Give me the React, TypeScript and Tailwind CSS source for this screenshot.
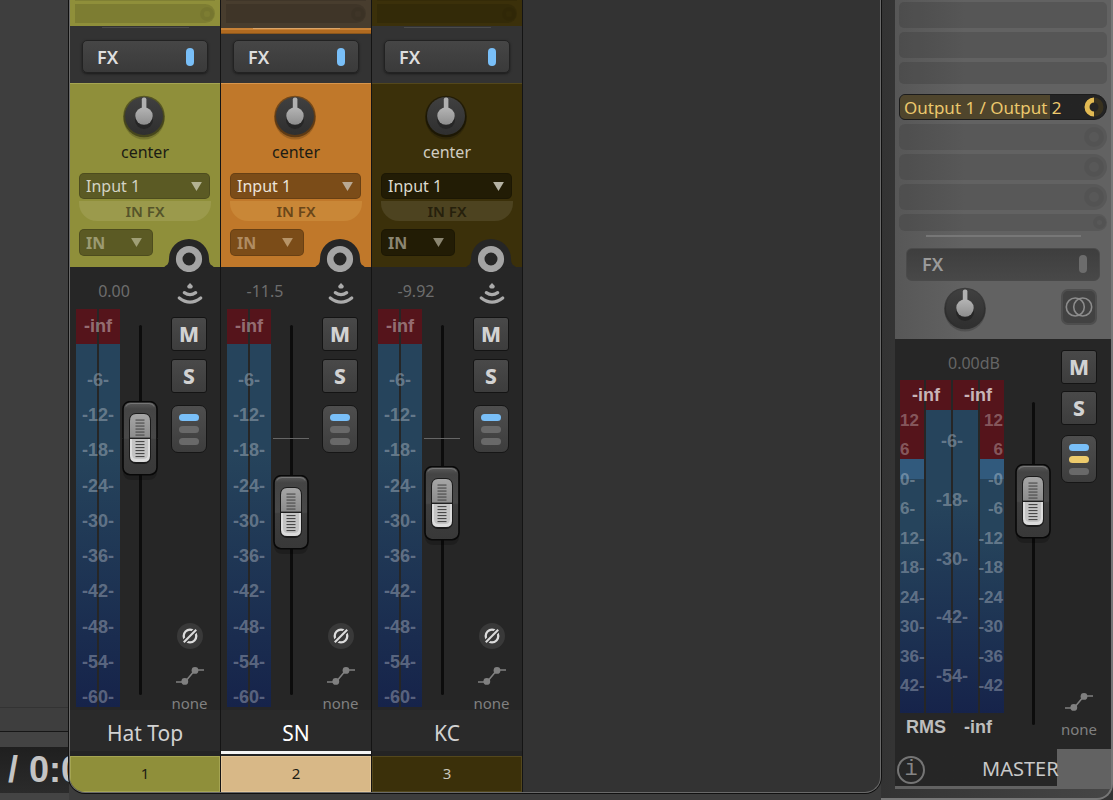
import { useState } from 'react';
import type { ReactNode } from 'react';

const CHANNELS = [
  {
    id: 1,
    name: 'Hat Top',
    db: '0.00',
    level: 0.743,
    color: 'bg-[#8f8f3a] border-t-[#a5a552]',
    tab: 'bg-[#8f8f3a] border-[#a5a552] text-[#1c1c14]',
    sends: 'bg-[#8f8f3a] h-[26px]',
    label: 'text-[#1c1c14]',
    select: 'bg-[#5b5a24] text-[#d3d3c4]',
    mode: 'bg-[#5b5a24] text-[#9b9a72]',
    arrow: 'text-[#b3b292]',
    modeArrow: 'text-[#a09f76]',
    inFx: 'bg-[#9b9a4c] text-[#55542a]',
    selected: false,
  },
  {
    id: 2,
    name: 'SN',
    db: '-11.5',
    level: 0.493,
    color: 'bg-[#c0782a] border-t-[#d8964c]',
    tab: 'bg-[#d8b887] border-[#e6c899] text-[#1c1c14]',
    sends: 'bg-[#483d2e] h-[28px]',
    label: 'text-[#1c1c14]',
    select: 'bg-[#7b4c18] text-[#ece4da]',
    mode: 'bg-[#7b4c18] text-[#b08c62]',
    arrow: 'text-[#b9a994]',
    modeArrow: 'text-[#b79468]',
    inFx: 'bg-[#c98737] text-[#694619]',
    selected: true,
  },
  {
    id: 3,
    name: 'KC',
    db: '-9.92',
    level: 0.524,
    color: 'bg-[#3b300a] border-t-[#53471c]',
    tab: 'bg-[#3b300a] border-[#53471c] text-[#c9c6ba]',
    sends: 'bg-[#3b300a] h-[26px]',
    label: 'text-[#d0cdc2]',
    select: 'bg-[#221c05] text-[#dcdacf]',
    mode: 'bg-[#221c05] text-[#8b8672]',
    arrow: 'text-[#b5b2a4]',
    modeArrow: 'text-[#8b8672]',
    inFx: 'bg-[#4d4320] text-[#26200c]',
    selected: false,
  },
];

const SCALE = ['-6-', '-12-', '-18-', '-24-', '-30-', '-36-', '-42-', '-48-', '-54-', '-60-'];
const MASTER_SCALE = ['-6-', '-18-', '-30-', '-42-', '-54-'];
const MASTER_LEFT = ['12', '6', '0-', '6-', '12-', '18-', '24-', '30-', '36-', '42-'];
const MASTER_RIGHT = ['12', '6', '-0', '-6', '-12', '-18', '-24', '-30', '-36', '-42'];
const GROOVES = [0, 3, 6, 9, 12, 15];

function Knob({ label }: { label: string }) {
  return (
    <label className="relative block h-[46px] w-[44px]">
      <svg viewBox="0 0 44 46" className="h-[46px] w-[44px]">
        <defs>
          <linearGradient id="knobBody" x1="0" y1="0" x2="0" y2="1">
            <stop offset="0" stopColor="#404040" />
            <stop offset="1" stopColor="#2f2f2f" />
          </linearGradient>
          <linearGradient id="knobBall" x1="0" y1="0" x2="0" y2="1">
            <stop offset="0" stopColor="#b4b4b4" />
            <stop offset="1" stopColor="#8e8e8e" />
          </linearGradient>
        </defs>
        <circle cx="22" cy="25" r="20.5" fill="#000" opacity="0.18" />
        <circle cx="22" cy="22.5" r="20.8" fill="#000" opacity="0.4" />
        <circle cx="22" cy="22" r="19" fill="url(#knobBody)" />
        <circle cx="22" cy="26" r="9" fill="#262626" />
        <rect x="19.8" y="3.5" width="4.6" height="13" rx="2" fill="#b0b0b0" />
        <circle cx="22" cy="22" r="8.7" fill="url(#knobBall)" />
      </svg>
      <input type="range" aria-label={label} min={-100} max={100} defaultValue={0} className="absolute inset-0 h-full w-full cursor-pointer opacity-0" />
    </label>
  );
}

function Fader({ label, level, unity }: { label: string; level: number; unity?: boolean }) {
  const [value, setValue] = useState(level);
  return (
    <div className="relative w-[36px] flex-1">
      <div className="mx-auto h-full w-[3px] rounded-sm bg-[#0c0c0c]" />
      {unity && <div className="absolute inset-x-0 top-[30.5%] h-px bg-[#666]" />}
      <svg viewBox="0 0 36 80" className="absolute left-0 h-[80px] w-[36px]" style={{ top: `calc((100% - 74px) * ${1 - value})` }}>
        <defs>
          <linearGradient id="capBody" x1="0" y1="0" x2="0" y2="1">
            <stop offset="0" stopColor="#5c5c5c" />
            <stop offset="0.1" stopColor="#444" />
            <stop offset="0.5" stopColor="#484848" />
            <stop offset="0.52" stopColor="#3e3e3e" />
            <stop offset="1" stopColor="#383838" />
          </linearGradient>
          <linearGradient id="capTop" x1="0" y1="0" x2="0" y2="1">
            <stop offset="0" stopColor="#a6a6a6" />
            <stop offset="1" stopColor="#8c8c8c" />
          </linearGradient>
        </defs>
        <rect x="1" y="5" width="34" height="74" rx="8" fill="#000" opacity="0.2" />
        <rect x="1" y="0.7" width="34" height="73" rx="7" fill="url(#capBody)" stroke="#080808" strokeWidth="1.6" />
        <path d="M4 5.5Q5 2.5 9 2.5H27Q31 2.5 32 5.5" fill="none" stroke="#777" strokeWidth="1" />
        <rect x="7" y="12" width="22" height="51" rx="7" fill="#1b1b1b" />
        <path d="M8 37V20Q8 13 14 13H22Q28 13 28 20V37Z" fill="url(#capTop)" />
        <path d="M8 38V55Q8 61 14 61H22Q28 61 28 55V38Z" fill="#dcdcdc" />
        <path d="M10 38H26V53Q26 58 21 58H15Q10 58 10 53Z" fill="#c4c4c4" />
        <rect x="8" y="36.6" width="20" height="1.2" fill="#222" />
        {GROOVES.map((y) => (
          <g key={y} fill="#484848">
            <rect x="13.5" y={18.5 + y} width="9" height="1.1" />
            <rect x="13.5" y={40 + y} width="9" height="1.1" />
          </g>
        ))}
      </svg>
      <input
        type="range"
        aria-label={label}
        min={0}
        max={1}
        step={0.001}
        value={value}
        onChange={(e) => setValue(Number(e.target.value))}
        className="absolute inset-0 h-full w-full cursor-pointer opacity-0 [direction:rtl] [writing-mode:vertical-lr]"
      />
    </div>
  );
}

function Select({ label, value, className, arrow }: { label: string; value: string; className: string; arrow: string }) {
  return (
    <div className={`relative rounded-[5px] ring-1 ring-black/15 ring-inset ${className}`}>
      <select aria-label={label} className="h-full w-full appearance-none px-[7px] leading-5 outline-none">
        <option>{value}</option>
      </select>
      <svg viewBox="0 0 12 10" className={`pointer-events-none absolute top-[9px] right-[8px] h-[9px] w-[11px] ${arrow}`}>
        <path d="M0 0H12L6 10Z" fill="currentColor" />
      </svg>
    </div>
  );
}

function SquareButton({ children, label }: { children: ReactNode; label: string }) {
  return (
    <button
      aria-label={label}
      className="flex h-[34px] w-[36px] items-center justify-center rounded-[3px] border border-[#141414] bg-linear-to-b from-[#494949] to-[#3d3d3d] pb-px text-[21px] leading-6 font-extrabold text-[#d2d2d2]"
    >
      {children}
    </button>
  );
}

function RouteButton({ master }: { master?: boolean }) {
  return (
    <button aria-label="Routing" className="flex h-[48px] w-[36px] flex-col items-center justify-center gap-[5px] rounded-[7px] border border-[#161616] bg-linear-to-b from-[#4e4e4e] to-[#3d3d3d]">
      <span className="h-[7px] w-[20px] rounded-full bg-[#79bff8]" />
      <span className={`h-[7px] w-[20px] rounded-full ${master ? 'bg-[#edcb6c]' : 'bg-[#696969]'}`} />
      <span className="h-[7px] w-[20px] rounded-full bg-[#696969]" />
    </button>
  );
}

function EnvelopeMode() {
  return (
    <button aria-label="Automation mode" className="flex flex-col items-center text-[#808080]">
      <svg viewBox="0 0 28 20" className="h-[20px] w-[28px]" fill="none" stroke="currentColor" strokeWidth="1.6">
        <path d="M0 16H9L19 4H28" />
        <circle cx="8.8" cy="15.4" r="3.4" fill="currentColor" stroke="none" />
        <circle cx="19" cy="4.4" r="3.4" fill="currentColor" stroke="none" />
      </svg>
      <span className="mt-[7px] text-[15px] leading-5">none</span>
    </button>
  );
}

function SendRing() {
  return <span className="h-[20px] w-[20px] rounded-full border-[5px] border-black/5" />;
}

function ChannelStrip({ channel: c }: { channel: (typeof CHANNELS)[number] }) {
  return (
    <section aria-label={c.name} className="flex w-[151px] flex-col border-r border-[#141414]">
      <div className="h-[34px]">
        <div className={`flex flex-col gap-[3px] px-[5px] ${c.sends}`}>
          <div className="h-px bg-black/10" />
          <div className="flex h-[19px] items-center justify-end rounded-r-full rounded-l-[5px] bg-black/12 pr-px">
            <span className="h-[14px] w-[14px] rounded-full border-4 border-black/5" />
          </div>
        </div>
        {c.selected ? (
          <div className="h-[6px] border-t-2 border-b border-t-[#c88237] border-b-[#8a561c] bg-[#b06a20]">
            <div className="mx-auto -mt-0.5 h-px w-[87px] bg-[#dba467]" />
          </div>
        ) : (
          <div className="mx-auto mt-px h-px w-[87px] bg-[#4a4a4a]" />
        )}
      </div>
      <div className="flex h-[49px] px-[12px] pt-[6px]">
        <button className="flex h-[33px] w-full items-center justify-between rounded-[5px] border border-[#222] bg-linear-to-b from-[#464646] to-[#3a3a3a] pr-[13px] pl-[14px] text-[18px] leading-6 font-semibold text-[#dedede] shadow-sm shadow-black/40">
          FX
          <span className="h-[18px] w-[8px] rounded-full bg-[#79bff8]" />
        </button>
      </div>

      <div className={`flex flex-col border-t pt-[10px] pr-[6px] pl-[9px] ${c.color}`}>
        <div className="flex flex-col items-center pr-[5px]">
          <Knob label={`${c.name} pan`} />
          <span className={`mt-[2px] pl-0.5 text-base leading-5 ${c.label}`}>center</span>
        </div>
        <Select label="Input" value="Input 1" className={`mt-[11px] mr-[4px] h-[26px] text-base ${c.select}`} arrow={c.arrow} />
        <button className={`mt-0.5 mr-[3px] h-[20px] rounded-b-[18px] text-[15px] leading-5 font-semibold ${c.inFx}`}>IN FX</button>
        <div className="mt-2 flex h-[38px] items-start justify-between">
          <Select label="Input mode" value="IN" className={`h-[27px] w-[74px] text-base font-bold ${c.mode}`} arrow={`mr-[3px] ${c.modeArrow}`} />
          <button aria-label="Record arm" className="relative mt-[10px] h-[33px] w-[50px]">
            <svg viewBox="0 0 50 33" className="h-[33px] w-[50px]">
              <path d="M0 28.2Q1.5 26.5 3.5 25.5Q5 24 5 20A20 20 0 0 1 45 20Q45 24 46.5 25.5Q48.5 26.5 50 28.2Z" fill="#262626" />
              <circle cx="25" cy="20" r="9.8" fill="none" stroke="#a4a4a4" strokeWidth="6.6" />
            </svg>
          </button>
        </div>
      </div>

      <div className="flex min-h-[443px] flex-1 bg-[#262626] pr-[13px]">
        <div className="flex flex-1 flex-col pb-[3px]">
          <div className="w-[88px] pt-[14px] pb-[8px] text-center text-base leading-5 text-[#6d6d6d]">{c.db}</div>
          <div className="flex flex-1 gap-[2px] pl-[6px]">
            <div className="relative flex w-[44px] gap-[2px]">
              <div className="flex-1 border-t-[35px] border-[#55141b] bg-linear-to-b from-[#26445c] from-30% to-[#16234a]" />
              <div className="flex-1 border-t-[35px] border-[#55141b] bg-linear-to-b from-[#26445c] from-30% to-[#16234a]" />
              <div className="absolute inset-0 flex flex-col items-center font-['Liberation_Sans',sans-serif] text-[18px] leading-5 font-bold text-white/30">
                <span className="mt-[7px] text-white/40">-inf</span>
                <div className="mt-[34px] flex flex-1 flex-col items-center justify-between">
                  {SCALE.map((s) => (
                    <span key={s}>{s}</span>
                  ))}
                </div>
              </div>
            </div>
            <div className="flex pt-[16px] pb-[12px]">
              <Fader label={`${c.name} volume`} level={c.level} unity />
            </div>
          </div>
        </div>
        <div className="flex w-[36px] flex-col items-center pt-[16px]">
          <button aria-label="Monitor" className="ml-px text-[#ababab]">
            <svg viewBox="0 0 26 22" className="h-[22px] w-[26px]" fill="none" stroke="currentColor" strokeWidth="3.2" strokeLinecap="round">
              <path d="M13 0L15.8 3Q15.8 5.6 13 5.6Q10.2 5.6 10.2 3Z" fill="currentColor" stroke="none" />
              <path d="M7.3 9.6Q13 13.6 18.7 9.6" />
              <path d="M2.3 15Q13 23.4 23.7 15" />
            </svg>
          </button>
          <div className="mt-[12px] flex flex-col gap-[8px]">
            <SquareButton label={`Mute ${c.name}`}>M</SquareButton>
            <SquareButton label={`Solo ${c.name}`}>S</SquareButton>
          </div>
          <div className="mt-[12px]">
            <RouteButton />
          </div>
          <button aria-label="Invert phase" className="mt-auto ml-[2px] flex h-[26px] w-[26px] items-center justify-center rounded-full bg-[#393939]">
            <svg viewBox="0 0 18 18" className="h-[18px] w-[18px]" fill="none">
              <circle cx="9" cy="9" r="6.3" stroke="#dcdcdc" strokeWidth="2.3" />
              <path d="M1 17L17 1" stroke="#393939" strokeWidth="4.8" />
              <path d="M2.8 15.2L15.2 2.8" stroke="#dcdcdc" strokeWidth="2" />
            </svg>
          </button>
          <div className="mt-[17px] -mb-[3px] ml-px">
            <EnvelopeMode />
          </div>
        </div>
      </div>

      <div className="flex h-[46px] flex-col bg-[#2a2a2a]">
        <div className={`flex flex-1 items-center justify-center pt-[5px] text-[21px] leading-7 ${c.selected ? 'text-white' : 'text-[#d2d2d2]'}`}>{c.name}</div>
        <div className={`h-[5px] border-b-2 border-[#242424] ${c.selected ? 'bg-[#f4f4f4]' : 'bg-[#242424]'}`} />
      </div>
      <div className={`flex h-[36px] items-center justify-center border pb-0.5 text-[15px] leading-5 ${c.tab}`}>{c.id}</div>
    </section>
  );
}

function MasterSlots() {
  return (
    <div className="flex flex-col gap-[4px] px-[4px] pt-[2px]">
      <div className="h-[26px] rounded-[5px] bg-black/12" />
      <div className="h-[26px] rounded-[5px] bg-black/12" />
      <div className="mb-[6px] h-[22px] rounded-[5px] bg-black/12" />
      <button className="flex h-[26px] items-center overflow-hidden rounded-r-[13px] rounded-l-[6px] border border-[#1c1c1c] bg-[#242424] pr-[2px] text-left text-[17px] leading-6 text-[#ecc86c]">
        <span className="flex-1 bg-linear-to-r from-[#4f452c] from-[150px] to-[#242424] to-[150px] pt-0.5 pl-[4px] whitespace-nowrap">Output 1 / Output 2</span>
        <svg viewBox="0 0 20 20" className="h-[20px] w-[20px]" fill="none" strokeWidth="5">
          <circle cx="10" cy="10" r="7" stroke="#39321f" />
          <path d="M10 17A7 7 0 0 1 10 3" stroke="#e2ba53" />
        </svg>
      </button>
      {[1, 2, 3].map((n) => (
        <div key={n} className="flex h-[26px] items-center justify-end rounded-r-[13px] rounded-l-[6px] bg-black/10 pr-[3px]">
          <SendRing />
        </div>
      ))}
      <div className="flex h-[17px] items-center justify-end rounded-r-[9px] rounded-l-[6px] bg-black/10 pr-px">
        <span className="h-[13px] w-[13px] rounded-full border-4 border-black/5" />
      </div>
    </div>
  );
}

function MasterScale({ items, align }: { items: string[]; align: string }) {
  return (
    <div className={`absolute inset-0 flex flex-col justify-between pt-[31px] pb-[17px] font-['Liberation_Sans',sans-serif] text-[17px] leading-5 font-bold text-white/30 ${align}`}>
      {items.map((s) => (
        <span key={s}>{s}</span>
      ))}
    </div>
  );
}

function MasterMeter() {
  return (
    <div className="relative flex w-[104px] flex-1 gap-[2px]">
      <div className="w-[24px] border-t-[79px] border-[#55141b] bg-linear-to-b from-[#26445c] from-30% to-[#16234a]">
        <div className="h-[20px] bg-[#315a7d]" />
      </div>
      <div className="flex-1 border-t-[30px] border-[#55141b] bg-linear-to-b from-[#26445c] from-30% to-[#16234a]" />
      <div className="flex-1 border-t-[30px] border-[#55141b] bg-linear-to-b from-[#26445c] from-30% to-[#16234a]" />
      <div className="w-[24px] border-t-[79px] border-[#55141b] bg-linear-to-b from-[#26445c] from-30% to-[#16234a]">
        <div className="h-[20px] bg-[#315a7d]" />
      </div>
      <MasterScale items={MASTER_LEFT} align="items-start" />
      <MasterScale items={MASTER_RIGHT} align="items-end pr-px" />
      <div className="absolute inset-0 flex flex-col items-center justify-between pt-[51px] pb-[27px] font-['Liberation_Sans',sans-serif] text-[18px] leading-5 font-bold text-white/30">
        {MASTER_SCALE.map((s) => (
          <span key={s}>{s}</span>
        ))}
      </div>
      <div className="absolute inset-x-0 top-[5px] flex justify-around font-['Liberation_Sans',sans-serif] text-[18px] leading-5 font-bold text-[#c9b4b7]">
        <span>-inf</span>
        <span>-inf</span>
      </div>
    </div>
  );
}

function MasterStrip() {
  return (
    <section aria-label="Master" className="flex w-[216px] flex-col">
      <div className="h-[339px] bg-linear-to-r from-[#575757] to-[#626262] to-[70px]">
        <MasterSlots />
        <div className="mx-auto mt-[4px] h-[2px] w-[155px] bg-[#777]" />
        <div className="px-[11px] pt-[11px]">
          <button className="flex h-[33px] w-full items-center justify-between rounded-[6px] border border-[#4a4a4a] bg-linear-to-b from-[#3e3e3e] to-[#484848] pr-[12px] pb-0.5 pl-[15px] text-[18px] leading-6 font-semibold text-[#9a9a9a]">
            FX
            <span className="h-[18px] w-[8px] rounded-full bg-[#6c6c6c]" />
          </button>
        </div>
        <div className="flex justify-between pt-[5px] pr-[14px] pl-[48px]">
          <Knob label="Master pan" />
          <button aria-label="Mono" className="mt-[3px] flex h-[36px] w-[36px] items-center justify-center rounded-[7px] border-2 border-[#4e4e4e] bg-[#424242]">
            <svg viewBox="0 0 28 20" className="h-[20px] w-[28px] shrink-0" fill="none" stroke="#8c8c8c" strokeWidth="1.6">
              <circle cx="10.3" cy="10" r="9" />
              <circle cx="17.7" cy="10" r="9" />
            </svg>
          </button>
        </div>
      </div>

      <div className="flex min-h-[410px] flex-1 bg-[#262626] pr-[14px] pl-[5px]">
        <div className="flex w-[104px] flex-col">
          <div className="pt-[14px] pb-[7px] pl-[48px] text-base leading-5 whitespace-nowrap text-[#656565]">0.00dB</div>
          <MasterMeter />
          <div className="flex h-[36px] justify-between pt-[4px] pr-[12px] pl-[6px] font-['Liberation_Sans',sans-serif] text-[18px] leading-5 font-bold text-[#bdbdbd]">
            <span>RMS</span>
            <span>-inf</span>
          </div>
        </div>
        <div className="ml-[11px] flex pt-[63px] pb-[24px]">
          <Fader label="Master volume" level={0.751} />
        </div>
        <div className="ml-auto flex flex-col items-center pt-[11px] pb-[10px]">
          <div className="flex flex-col gap-[7px]">
            <SquareButton label="Mute master">M</SquareButton>
            <SquareButton label="Solo master">S</SquareButton>
          </div>
          <div className="mt-[10px] mb-auto">
            <RouteButton master />
          </div>
          <EnvelopeMode />
        </div>
      </div>

      <div className="flex h-[40px] border-b-[3px] border-[#626262] bg-linear-to-r from-[#262626] from-[162px] to-[#626262] to-[162px] pl-[2px]">
        <button aria-label="Info" className="mt-[7px] flex h-[28px] w-[28px] items-center justify-center rounded-full border-2 border-[#757575] font-['Liberation_Mono',monospace] text-[22px] leading-6 text-[#858585]">
          i
        </button>
        <span className="ml-[57px] pt-[6px] text-[20px] leading-7 text-[#c9c9c9]">MASTER</span>
      </div>
    </section>
  );
}

export default function App() {
  return (
    <div className="flex min-h-screen overflow-hidden bg-[#343434] font-['Noto_Sans',sans-serif]">
      <aside className="flex w-[69px] shrink-0 flex-col bg-[#3e3e3e]">
        <div className="flex-1" />
        <div className="h-[25px] border-y border-t-[#333] border-b-[#161616] bg-[#3e3e3e]" />
        <div className="h-[15px] bg-[#434343]" />
        <div className="flex h-[46px] items-center gap-[11px] bg-linear-to-b from-[#1f1f1f] to-[#2b2b2b] pl-[8px] font-['Liberation_Sans',sans-serif] text-[36px] leading-10 font-bold whitespace-nowrap text-[#c4c4c4]">
          <span>/</span>
          <span>0:0</span>
        </div>
        <div className="h-[7px] bg-[#444]" />
      </aside>

      <div className="relative flex flex-1 flex-col bg-[#3c3c3c]">
        <main className="flex flex-1 overflow-hidden rounded-b-[16px] border-x border-b border-[#6a6a6a] bg-[#333] shadow-[0_0_0_1px_#101010]">
          {CHANNELS.map((c) => (
            <ChannelStrip key={c.id} channel={c} />
          ))}
        </main>
        <div className="h-[7px]" />
      </div>

      <div className="flex shrink-0 rounded-br-[16px] border-r-2 border-b-2 border-[#777] bg-linear-to-r from-[#333] to-[#464646] pb-[9px] pl-[14px]">
        <MasterStrip />
      </div>
    </div>
  );
}
